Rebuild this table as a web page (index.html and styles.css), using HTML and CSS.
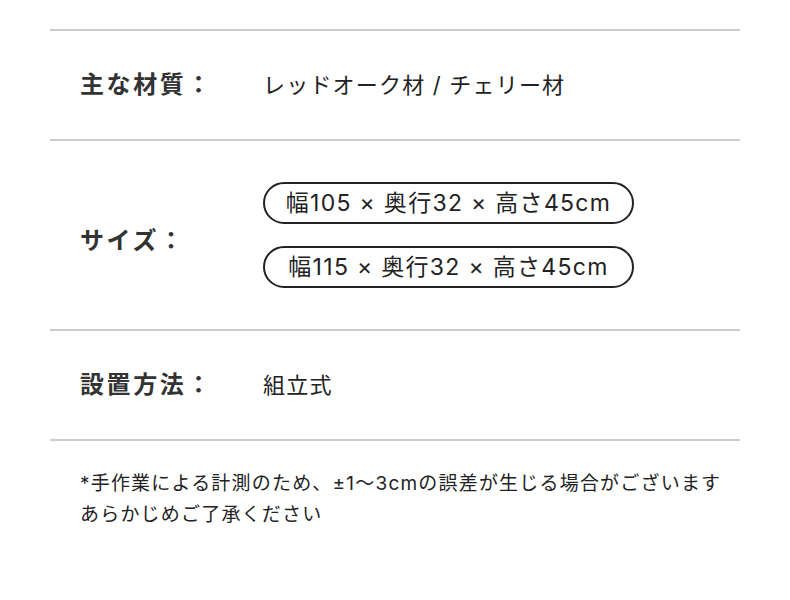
FILE: index.html
```html
<!DOCTYPE html>
<html lang="ja">
<head>
<meta charset="utf-8">
<link rel="stylesheet" href="styles.css">
</head>
<body>
<div class="spec">
  <div class="row">
    <div class="label">主な材質：</div>
    <div class="value">レッドオーク材 / チェリー材</div>
  </div>
  <div class="row">
    <div class="label label-size">サイズ：</div>
    <div class="value pills">
      <div class="pill">幅105 × 奥行32 × 高さ45cm</div>
      <div class="pill">幅115 × 奥行32 × 高さ45cm</div>
    </div>
  </div>
  <div class="row">
    <div class="label">設置方法：</div>
    <div class="value">組立式</div>
  </div>
  <p class="note">*手作業による計測のため、±1〜3cmの誤差が生じる場合がございます<br>あらかじめご了承ください</p>
</div>
</body>
</html>
```

FILE: styles.css
```css
html, body {
  margin: 0;
  padding: 0;
  background: #fff;
}
body {
  font-family: Inter, "Noto Sans CJK JP", sans-serif;
  color: #222;
}
.spec {
  margin: 29px 50px 0;
  border-top: 2px solid #cccccc;
}
.row {
  display: flex;
  align-items: center;
  padding: 41px 0 41px 30px;
  border-bottom: 2px solid #cccccc;
}
.label {
  width: 183px;
  flex: none;
  font-size: 24px;
  font-weight: 700;
  color: #333;
  line-height: 26px;
  letter-spacing: 2.6px;
}
.label-size {
  position: relative;
  top: 6px;
}
.value {
  font-size: 22px;
  line-height: 26px;
  letter-spacing: 1.2px;
}
.pills {
  display: flex;
  flex-direction: column;
  gap: 22px;
}
.pill {
  box-sizing: border-box;
  width: 371px;
  height: 42px;
  border: 2px solid #222;
  border-radius: 21px;
  display: flex;
  align-items: center;
  justify-content: center;
  font-size: 23px;
  letter-spacing: 1.3px;
}
.note {
  margin: 27px 0 0 30px;
  font-size: 19px;
  line-height: 31px;
  letter-spacing: 1.2px;
  color: #222;
}
```
